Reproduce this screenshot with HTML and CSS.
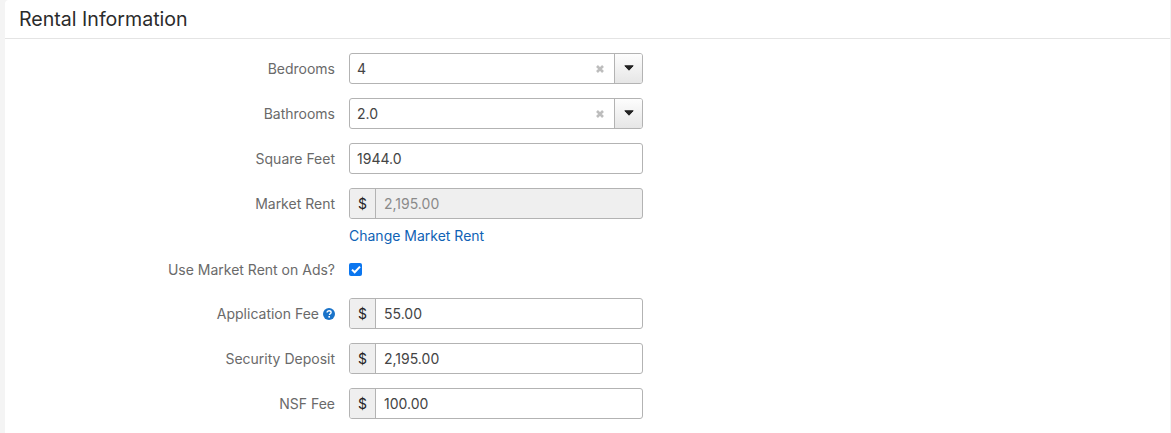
FILE: index.html
```html
<!DOCTYPE html>
<html lang="en">
<head>
<meta charset="utf-8">
<title>Rental Information</title>
<link rel="stylesheet" href="styles.css">
</head>
<body>
<section class="card">
  <header class="card-head"><h2>Rental Information</h2></header>
  <form class="form">
    <div class="row">
      <label class="label">Bedrooms</label>
      <div class="control select">
        <span class="value">4</span>
        <svg class="clear" width="8" height="8" viewBox="0 0 8 8"><path d="M1 1l6 6M7 1L1 7" stroke="#bdbdbd" stroke-width="2.6" fill="none"/></svg>
        <span class="caret-box"><svg width="10" height="6" viewBox="0 0 10 6"><path d="M0.8 0.8h8.4L5 5.2z" fill="#222" stroke="#222" stroke-width="1" stroke-linejoin="round"/></svg></span>
      </div>
    </div>
    <div class="row">
      <label class="label">Bathrooms</label>
      <div class="control select">
        <span class="value">2.0</span>
        <svg class="clear" width="8" height="8" viewBox="0 0 8 8"><path d="M1 1l6 6M7 1L1 7" stroke="#bdbdbd" stroke-width="2.6" fill="none"/></svg>
        <span class="caret-box"><svg width="10" height="6" viewBox="0 0 10 6"><path d="M0.8 0.8h8.4L5 5.2z" fill="#222" stroke="#222" stroke-width="1" stroke-linejoin="round"/></svg></span>
      </div>
    </div>
    <div class="row">
      <label class="label">Square Feet</label>
      <div class="control"><span class="value">1944.0</span></div>
    </div>
    <div class="row">
      <label class="label">Market Rent</label>
      <div class="control disabled"><span class="addon">$</span><span class="value">2,195.00</span></div>
    </div>
    <div class="row row-link">
      <span class="label"></span>
      <a class="link" href="#">Change Market Rent</a>
    </div>
    <div class="row row-check">
      <label class="label">Use Market Rent on Ads?</label>
      <span class="check"><svg width="10" height="9" viewBox="0 0 10 9"><path d="M1 4.6l2.7 2.7L9 1.6" stroke="#fff" stroke-width="2" fill="none"/></svg></span>
    </div>
    <div class="row">
      <label class="label">Application Fee<svg class="help" width="12" height="12" viewBox="0 0 12 12"><circle cx="6" cy="6" r="6" fill="#1a73c9"/><path d="M4.1 4.6c0-1.2.9-1.9 2-1.9s2 .7 2 1.7c0 1.4-1.6 1.4-1.6 2.5" stroke="#fff" stroke-width="1.4" fill="none"/><rect x="5.4" y="8" width="1.6" height="1.6" fill="#fff"/></svg></label>
      <div class="control"><span class="addon">$</span><span class="value">55.00</span></div>
    </div>
    <div class="row">
      <label class="label">Security Deposit</label>
      <div class="control"><span class="addon">$</span><span class="value">2,195.00</span></div>
    </div>
    <div class="row">
      <label class="label">NSF Fee</label>
      <div class="control"><span class="addon">$</span><span class="value">100.00</span></div>
    </div>
  </form>
</section>
</body>
</html>
```
FILE: styles.css
```css
* { box-sizing: border-box; }
html, body { height: 100%; }
body {
  margin: 0;
  background: #f4f4f4;
  font-family: Inter, "Liberation Sans", sans-serif;
  font-size: 14px;
  color: #333;
  overflow: hidden;
}
.card {
  margin: 0 1px 0 5px;
  min-height: 433px;
  background: #fff;
  border-top-left-radius: 4px;
}
.card-head {
  height: 39px;
  padding-left: 14px;
  border-bottom: 1px solid #e4e4e4;
}
.card-head h2 {
  margin: 0;
  font-size: 19.6px;
  font-weight: 400;
  line-height: 39px;
  color: #2b2b2b;
}
.form {
  display: flex;
  flex-direction: column;
  gap: 14px;
  padding-top: 14px;
}
.row {
  display: flex;
  align-items: center;
  gap: 14px;
  min-height: 31px;
}
.row-link { min-height: 17px; margin-top: -6px; }
.row-check { min-height: 17px; margin-top: 3px; margin-bottom: 6px; }
.label {
  flex: 0 0 330px;
  text-align: right;
  color: #6a6a6a;
  line-height: 17px;
}
.control {
  display: flex;
  align-items: center;
  width: 294px;
  height: 31px;
  border: 1px solid #b3b3b3;
  border-radius: 3px;
  background: #fff;
  overflow: hidden;
}
.value {
  flex: 1;
  padding-left: 7px;
  color: #444;
}
.addon + .value { padding-left: 8px; }
.addon {
  flex: 0 0 26px;
  align-self: stretch;
  display: flex;
  align-items: center;
  justify-content: center;
  background: #efefef;
  border-right: 1px solid #b3b3b3;
  color: #222;
}
.disabled { background: #efefef; }
.disabled .value { color: #8a8a8a; }
.clear { margin-right: 10px; margin-top: 1px; }
.caret-box {
  flex: 0 0 28px;
  align-self: stretch;
  display: flex;
  align-items: center;
  justify-content: center;
  border-left: 1px solid #b3b3b3;
  background: linear-gradient(#fdfdfd, #e6e6e6);
}
.caret-box svg { margin-bottom: 1px; }
.link {
  color: #0f62b5;
  text-decoration: none;
  line-height: 17px;
}
.check {
  display: flex;
  align-items: center;
  justify-content: center;
  width: 13px;
  height: 13px;
  border-radius: 2px;
  background: #0b76ef;
}
.help { margin-left: 4px; vertical-align: -1px; }
```
